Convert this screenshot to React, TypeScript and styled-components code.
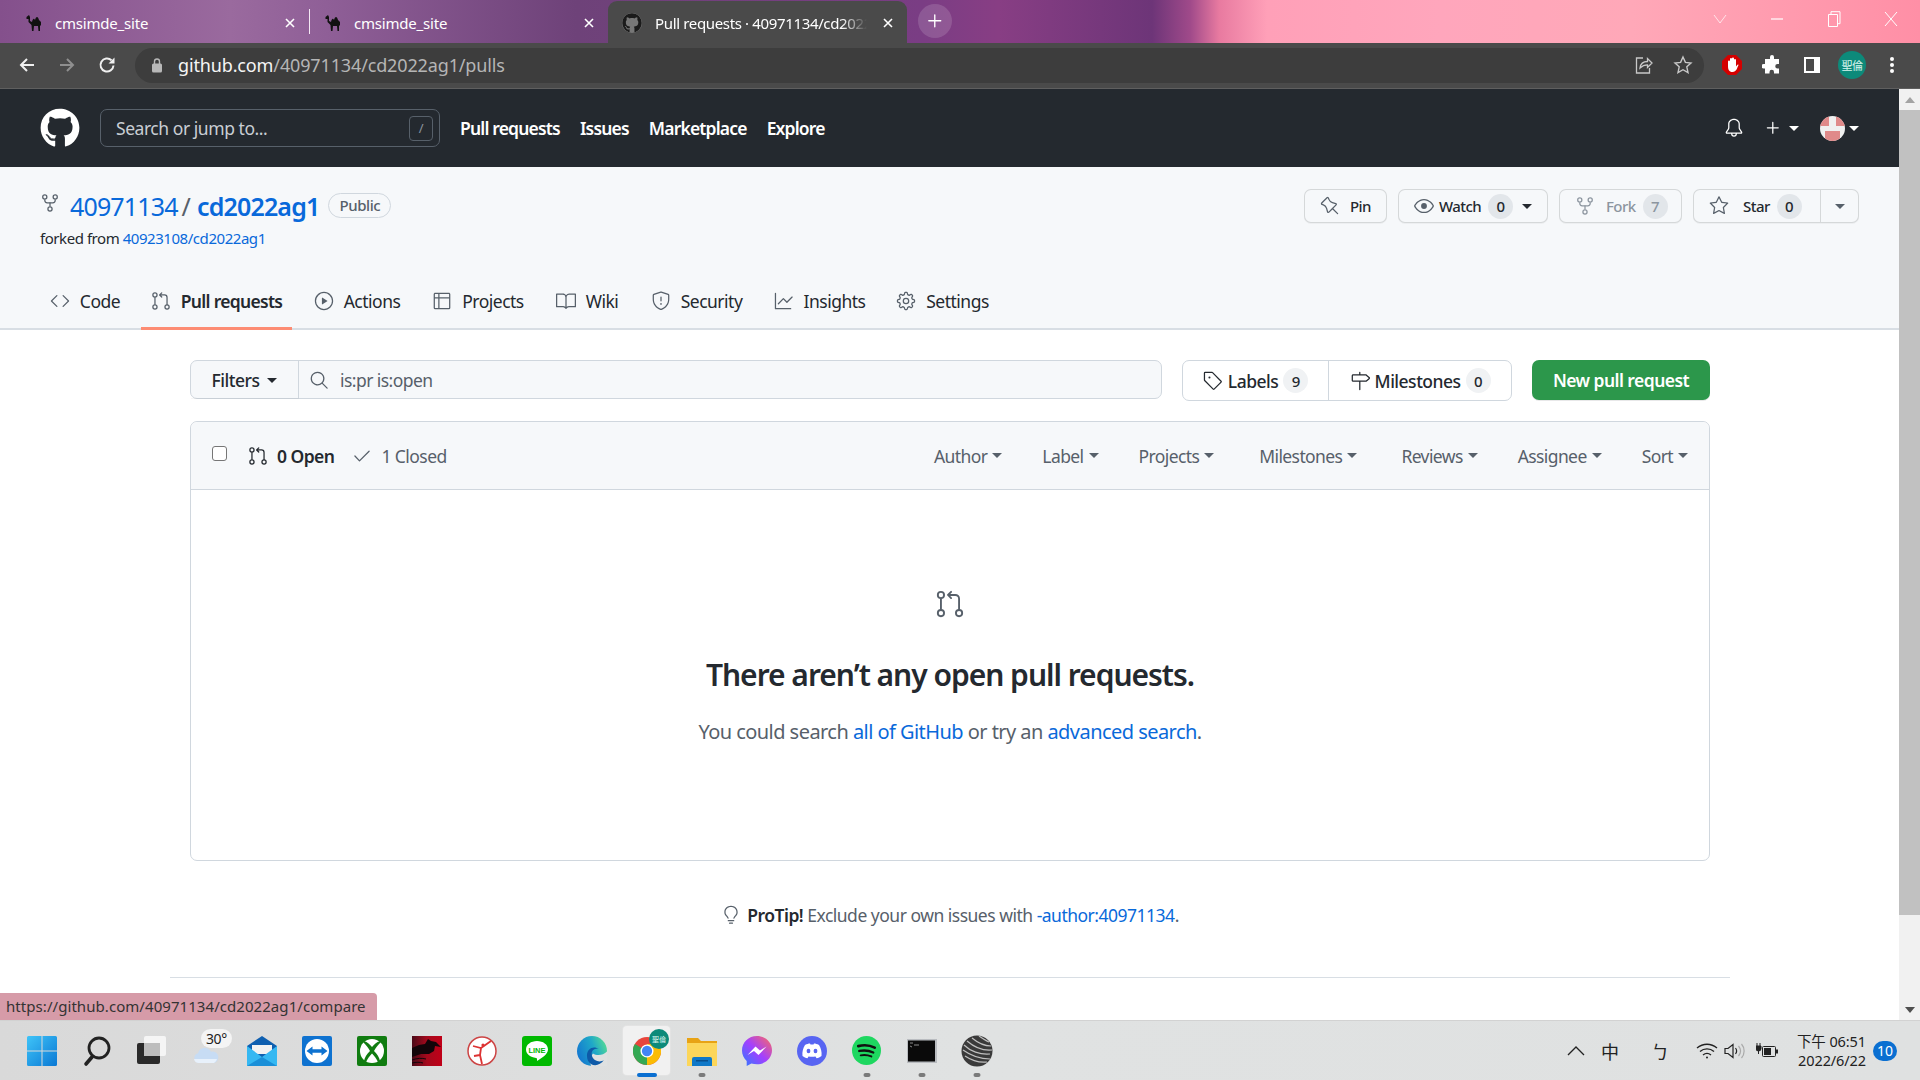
import React from 'react';
import styled, { createGlobalStyle } from 'styled-components';
import {
  GoBell, GoBook, GoCheck, GoCode, GoEye, GoGear, GoGitPullRequest, GoGraph, GoLightBulb,
  GoMilestone, GoPin, GoPlay, GoPlus, GoRepoForked, GoSearch, GoShield,
  GoStar, GoTable, GoTag,
} from 'react-icons/go';
import { FaGithub } from 'react-icons/fa';

const sans = '"Noto Sans", "Noto Sans CJK TC", sans-serif';

const GlobalStyle = createGlobalStyle`
  html, body { margin: 0; padding: 0; height: 100%; overflow: hidden; }
  body { font-family: ${sans}; color: #24292f; background: #fff; }
  * { box-sizing: border-box; }
  a { color: #0969da; text-decoration: none; }
`;

const Screen = styled.div`
  width: 1920px;
  height: 1080px;
  display: flex;
  flex-direction: column;
  overflow: hidden;
`;

/* browser chrome */
const TabStrip = styled.div`
  height: 43px;
  flex: none;
  display: flex;
  align-items: flex-end;
  padding-left: 10px;
  background: linear-gradient(90deg, #84508c 0%, #9a6a9e 12%, #8f5f97 17%, #6e4279 30%, #7a3d84 48%, #883e84 52%, #6d3578 60%, #a04a8a 62%, #e87aa0 63.500%, #ffa0b8 66%, #ffa6bc 75%, #ffa8b8 85%, #ff8fa6 100%);
`;

const BrowserTab = styled.div<{ $active?: boolean }>`
  width: 299px;
  height: 42px;
  display: flex;
  align-items: center;
  gap: 13px;
  padding: 2px 11px 0 16px;
  color: #fff;
  font-size: 15px;
  letter-spacing: -0.2px;
  border-radius: 9px 9px 0 0;
  background: ${p => (p.$active ? '#4a4a4a' : 'transparent')};
`;

const TabDivider = styled.div`
  width: 1px;
  height: 25px;
  margin: 0 -1px 9px 0;
  background: #f4e8f4;
  flex: none;
`;

const TabTitle = styled.span<{ $fade?: boolean }>`
  flex: 1;
  white-space: nowrap;
  overflow: hidden;
  ${p => p.$fade && 'mask-image: linear-gradient(90deg, #000 88%, transparent 100%); letter-spacing: -0.35px;'}
`;

const NewTab = styled.div`
  width: 34px;
  height: 34px;
  margin: 0 0 1px 11px;
  border-radius: 50%;
  display: flex;
  align-items: center;
  justify-content: center;
  background: rgba(255, 255, 255, .14);
  align-self: center;
`;

const WindowButtons = styled.div`
  margin-left: auto;
  align-self: stretch;
  display: flex;
  padding-right: 1px;
`;

const WindowButton = styled.div`
  width: 57px;
  display: flex;
  align-items: center;
  justify-content: center;
  padding-bottom: 6px;
`;

const Toolbar = styled.div`
  height: 46px;
  flex: none;
  display: flex;
  align-items: center;
  padding: 0 8px 1px 7px;
  background: #4a4a4a;
  border-bottom: 1px solid #5f5f5f;
`;

const ToolButton = styled.div<{ $dim?: boolean }>`
  width: 40px;
  height: 34px;
  flex: none;
  display: flex;
  align-items: center;
  justify-content: center;
  color: ${p => (p.$dim ? '#8f8f8f' : '#f0f0f0')};
`;

const Omnibox = styled.div`
  flex: 1;
  height: 35px;
  margin: 0 8px;
  padding: 0 2px 0 15px;
  display: flex;
  align-items: center;
  border-radius: 18px;
  background: #3d3d3d;
`;

const Url = styled.div`
  margin-left: 14px;
  flex: 1;
  font-size: 18px;
  letter-spacing: -0.14px;
  color: #b5b5b5;
  b { font-weight: 400; color: #f5f5f5; }
`;

const OmniAction = styled.div`
  width: 39px;
  display: flex;
  justify-content: center;
  color: #c8c8c8;
`;

const ProfileChip = styled.div`
  width: 28px;
  height: 28px;
  border-radius: 50%;
  background: #0d8a7a;
  color: #d8f5ef;
  font-size: 11px;
  letter-spacing: -0.5px;
  display: flex;
  align-items: center;
  justify-content: center;
  font-family: "Noto Sans CJK TC", sans-serif;
`;

/* page */
const Viewport = styled.div`
  flex: 1;
  min-height: 0;
  display: flex;
  position: relative;
`;

const Page = styled.div`
  flex: 1;
  min-width: 0;
  overflow: hidden;
`;

const Scrollbar = styled.div`
  width: 21px;
  flex: none;
  display: flex;
  flex-direction: column;
  background: #f1f1f1;
`;

const ScrollArrow = styled.div<{ $down?: boolean }>`
  height: 21px;
  flex: none;
  display: flex;
  align-items: center;
  justify-content: center;
  &::after {
    content: '';
    border-left: 5px solid transparent;
    border-right: 5px solid transparent;
    ${p => (p.$down ? 'border-top: 6px solid #505050;' : 'border-bottom: 6px solid #a3a3a3;')}
  }
`;

const ScrollThumb = styled.div`
  height: 805px;
  flex: none;
  background: #c1c1c1;
`;

const ScrollRest = styled.div`
  flex: 1;
`;

const StatusBubble = styled.div`
  position: absolute;
  left: 0;
  bottom: 0;
  height: 27px;
  padding: 0 11px 1px 6px;
  display: flex;
  align-items: center;
  font-size: 15px;
  letter-spacing: 0.06px;
  color: #333;
  background: #d69ba8;
  border-top-right-radius: 4px;
  font-family: "Noto Sans", sans-serif;
`;

const Header = styled.header`
  height: 78px;
  display: flex;
  align-items: center;
  padding: 0 40px 0 40px;
  background: #24292f;
  color: #fff;
`;

const HeaderSearch = styled.div`
  width: 340px;
  height: 38px;
  margin-left: 20px;
  padding: 0 6px 0 15px;
  display: flex;
  align-items: center;
  justify-content: space-between;
  border: 1px solid #57606a;
  border-radius: 7px;
  color: #c9ced4;
  font-size: 17.5px;
  letter-spacing: -0.45px;
`;

const SlashKey = styled.span`
  width: 24px;
  height: 25px;
  display: flex;
  align-items: center;
  justify-content: center;
  border: 1px solid #57606a;
  border-radius: 4px;
  font-size: 13px;
  color: #8b949e;
`;

const HeaderNav = styled.nav`
  display: flex;
  gap: 20px;
  margin-left: 20px;
  font-size: 17.5px;
  font-weight: 600;
  letter-spacing: -0.82px;
`;

const HeaderRight = styled.div`
  margin-left: auto;
  display: flex;
  align-items: center;
`;

const Caret = styled.span<{ $color?: string; $size?: number; $left?: number }>`
  display: inline-block;
  flex: none;
  margin-left: ${p => p.$left ?? 5}px;
  border-left: ${p => p.$size ?? 5}px solid transparent;
  border-right: ${p => p.$size ?? 5}px solid transparent;
  border-top: ${p => p.$size ?? 5}px solid ${p => p.$color ?? 'currentColor'};
`;

const PlusSlot = styled.span`
  display: flex;
  margin: 0 21px 0 19px;
  align-items: center;
`;

const RepoHead = styled.div`
  height: 163px;
  display: flex;
  flex-direction: column;
  justify-content: space-between;
  padding: 22px 40px 0 40px;
  background: #f6f8fa;
  border-bottom: 2px solid #d8dee4;
`;

const RepoTop = styled.div`
  display: flex;
  justify-content: space-between;
  align-items: flex-start;
`;

const RepoTitle = styled.div`
  display: flex;
  align-items: center;
  height: 34px;
  font-size: 25px;
  letter-spacing: -0.85px;
  color: #57606a;
  svg { margin: -6px 10px 0 0; }
`;

const Slash = styled.span`
  margin: 0 7px 0 4px;
`;

const RepoName = styled.a`
  font-weight: 600;
`;

const PublicBadge = styled.span`
  margin: -2px 0 0 9px;
  height: 25px;
  padding: 0 10px;
  display: flex;
  align-items: center;
  border: 1px solid #d0d7de;
  border-radius: 13px;
  font-size: 15px;
  font-weight: 500;
  letter-spacing: -0.4px;
  color: #57606a;
`;

const ForkedFrom = styled.div`
  margin-top: 4px;
  font-size: 15px;
  line-height: 22px;
  letter-spacing: -0.45px;
  color: #24292f;
`;

const RepoActions = styled.div`
  display: flex;
  gap: 11px;
`;

const ActionButton = styled.div<{ $muted?: boolean; $w: number }>`
  width: ${p => p.$w}px;
  height: 34px;
  display: flex;
  align-items: center;
  padding-left: 15px;
  border: 1px solid rgba(27, 31, 36, .15);
  border-radius: 7px;
  background: #f6f8fa;
  box-shadow: 0 1px 0 rgba(27, 31, 36, .04);
  font-size: 15px;
  font-weight: 500;
  letter-spacing: -0.55px;
  color: ${p => (p.$muted ? '#8c959f' : '#24292f')};
  svg { color: ${p => (p.$muted ? '#8c959f' : '#57606a')}; flex: none; }
`;

const ActionLabel = styled.span<{ $left: number }>`
  margin: 0 7px 0 ${p => p.$left}px;
`;

const ActionSplit = styled.div`
  display: flex;
  align-items: center;
  align-self: stretch;
  width: 38px;
  justify-content: center;
  margin-left: auto;
  border-left: 1px solid rgba(27, 31, 36, .15);
  color: #57606a;
`;

const Counter = styled.span<{ $light?: boolean }>`
  min-width: 25px;
  height: 25px;
  padding: 0 6px;
  display: inline-flex;
  align-items: center;
  justify-content: center;
  border-radius: 13px;
  font-size: 15px;
  font-weight: 500;
  letter-spacing: -0.3px;
  background: ${p => (p.$light ? '#f0f2f4' : 'rgba(175, 184, 193, .28)')};
`;

const RepoTabs = styled.nav`
  display: flex;
  gap: 11px;
  margin-bottom: -2px;
`;

const RepoTab = styled.a<{ $active?: boolean; $w: number }>`
  width: ${p => p.$w}px;
  height: 48px;
  padding-bottom: 8px;
  display: flex;
  align-items: center;
  justify-content: center;
  gap: 10px;
  font-size: 17.5px;
  font-weight: ${p => (p.$active ? 600 : 400)};
  letter-spacing: ${p => (p.$active ? -0.7 : -0.5)}px;
  color: #24292f;
  border-bottom: 3px solid ${p => (p.$active ? '#fd8c73' : 'transparent')};
  svg { color: #57606a; flex: none; }
`;

const Main = styled.main`
  width: 1520px;
  margin-left: 190px;
  padding-top: 30px;
`;

const FilterRow = styled.div`
  display: flex;
  align-items: flex-start;
  gap: 20px;
`;

const FilterSearch = styled.div`
  flex: 1;
  height: 39px;
  display: flex;
  border: 1px solid #d0d7de;
  border-radius: 7px;
  background: #f6f8fa;
  font-size: 17.5px;
`;

const FiltersButton = styled.div`
  width: 108px;
  flex: none;
  display: flex;
  align-items: center;
  justify-content: center;
  padding-top: 1px;
  font-weight: 500;
  letter-spacing: -0.5px;
  border-right: 1px solid #d0d7de;
  box-shadow: 0 1px 0 rgba(27, 31, 36, .04);
`;

const SearchField = styled.div`
  flex: 1;
  display: flex;
  align-items: center;
  gap: 11px;
  padding: 1px 0 0 10px;
  color: #57606a;
  letter-spacing: -0.55px;
`;

const LabelGroup = styled.div`
  width: 330px;
  height: 41px;
  flex: none;
  display: flex;
  border: 1px solid #d0d7de;
  border-radius: 7px;
  font-size: 17.5px;
  font-weight: 500;
  letter-spacing: -0.5px;
`;

const LabelLink = styled.div<{ $w: number }>`
  width: ${p => p.$w}px;
  display: flex;
  align-items: center;
  justify-content: center;
  gap: 5px;
  & + & { border-left: 1px solid #d0d7de; }
  svg { flex: none; }
`;

const NewPullButton = styled.div`
  width: 178px;
  height: 40px;
  flex: none;
  display: flex;
  align-items: center;
  justify-content: center;
  border-radius: 7px;
  background: #2c974b;
  color: #fff;
  font-size: 17.5px;
  font-weight: 600;
  letter-spacing: -0.55px;
  box-shadow: 0 1px 0 rgba(27, 31, 36, .1);
`;

const IssueBox = styled.section`
  margin-top: 20px;
  height: 440px;
  display: flex;
  flex-direction: column;
  border: 1px solid #d0d7de;
  border-radius: 7px;
`;

const BoxHeader = styled.div`
  height: 68px;
  flex: none;
  display: flex;
  align-items: center;
  padding: 0 21px;
  background: #f6f8fa;
  border-bottom: 1px solid #d0d7de;
  border-radius: 7px 7px 0 0;
  font-size: 17.5px;
  letter-spacing: -0.55px;
`;

const Check = styled.span`
  width: 15px;
  height: 15px;
  margin: -4px 21px 0 0;
  border: 1px solid #767676;
  border-radius: 3px;
  background: #fff;
`;

const StateLink = styled.div<{ $open?: boolean }>`
  display: flex;
  align-items: center;
  gap: 9px;
  margin-right: 18px;
  font-weight: ${p => (p.$open ? 600 : 400)};
  color: ${p => (p.$open ? '#24292f' : '#57606a')};
  svg { color: ${p => (p.$open ? '#24292f' : '#57606a')}; }
`;

const HeadFilters = styled.div`
  margin-left: auto;
  display: flex;
  color: #57606a;
  letter-spacing: -0.6px;
`;

const HeadFilter = styled.div<{ $gap: number }>`
  display: flex;
  align-items: center;
  margin-right: ${p => p.$gap}px;
`;

const Blankslate = styled.div`
  flex: 1;
  display: flex;
  flex-direction: column;
  align-items: center;
  padding-top: 99px;
  color: #57606a;
`;

const BlankTitle = styled.h3`
  margin: 35px 0 0;
  font-size: 30px;
  line-height: 42px;
  font-weight: 600;
  letter-spacing: -1.02px;
  color: #24292f;
`;

const BlankText = styled.p`
  margin: 21px 0 0;
  font-size: 20px;
  line-height: 30px;
  letter-spacing: -0.55px;
`;

const ProTip = styled.div`
  margin-top: 42px;
  display: flex;
  align-items: center;
  justify-content: center;
  font-size: 17.5px;
  line-height: 24px;
  letter-spacing: -0.5px;
  color: #57606a;
  svg { margin-right: 6px; }
  b { font-weight: 600; color: #24292f; }
`;

const FooterRule = styled.hr`
  width: 1560px;
  margin: 50px auto 0;
  border: 0;
  border-top: 1px solid #d8dee4;
`;

/* taskbar */
const Taskbar = styled.footer`
  height: 60px;
  flex: none;
  display: flex;
  align-items: center;
  padding: 0 23px 0 14px;
  background: linear-gradient(90deg, #d9d9d9, #e0e2e2 50%, #dfe1e1);
  border-top: 1px solid #d2d2d2;
`;

const TaskItem = styled.div<{ $active?: boolean }>`
  position: relative;
  width: 55px;
  height: 49px;
  display: flex;
  align-items: center;
  justify-content: center;
  ${p => p.$active && `
    &::before {
      content: '';
      position: absolute;
      inset: 0 4px;
      background: #f1f1f1;
      border-radius: 4px;
      box-shadow: 0 0 0 1px #e3e3e3;
    }
  `}
  svg { position: relative; }
`;

const RunDot = styled.span<{ $active?: boolean }>`
  position: absolute;
  bottom: -2px;
  left: 50%;
  transform: translateX(-50%);
  width: ${p => (p.$active ? 20 : 7)}px;
  height: 4px;
  border-radius: 3px;
  background: ${p => (p.$active ? '#0a6fd1' : '#7a7a7a')};
`;

const WeatherBadge = styled.span`
  position: absolute;
  top: 3px;
  right: 2px;
  padding: 1px 5px;
  border-radius: 10px;
  background: #f4f4f4;
  font-size: 14px;
  line-height: 17px;
  letter-spacing: -0.3px;
  color: #222;
`;

const ChromeBadge = styled.span`
  position: absolute;
  top: 3px;
  right: 5px;
  width: 20px;
  height: 20px;
  border-radius: 50%;
  background: #0d8a7a;
  color: #d8f5ef;
  font-size: 7px;
  line-height: 20px;
  text-align: center;
  font-family: "Noto Sans CJK TC", sans-serif;
`;

const Tray = styled.div`
  margin-left: auto;
  display: flex;
  align-items: center;
  color: #222;
`;

const TrayItem = styled.div<{ $w: number }>`
  width: ${p => p.$w}px;
  display: flex;
  justify-content: center;
  font-size: 18px;
  font-family: "Noto Sans CJK TC", sans-serif;
`;

const Clock = styled.div`
  width: 81px;
  margin-right: 7px;
  text-align: right;
  font-size: 14.5px;
  line-height: 19px;
  white-space: nowrap;
  font-family: "Noto Sans", "Noto Sans CJK TC", sans-serif;
  letter-spacing: -0.1px;
`;

const NotifyBadge = styled.div`
  width: 24px;
  height: 20px;
  border-radius: 10px;
  background: #0a6fd1;
  color: #fff;
  font-size: 14px;
  display: flex;
  align-items: center;
  justify-content: center;
`;

/* drawings */
const CamelFavicon = () => (
  <svg width="16" height="18" viewBox="0 0 16 18" style={{ flex: 'none' }}>
    <path d="M3 1L4 3V7L6 8C7 4 8 4 9 6C10 2 12 2 13 6L15 8V11L14 12V17H12.500L12 12H8L7.500 17H6L5.500 11L2.500 8V5H.5V3z" fill="#111" />
  </svg>
);

const GithubFavicon = () => <FaGithub size={20} color="#1b1b1b" style={{ marginLeft: -2, background: '#777', borderRadius: '50%', flex: 'none' }} />;

const CloseX = () => (
  <svg width="16" height="16" viewBox="0 0 16 16" style={{ flex: 'none' }}>
    <path d="M4 4l8 8M12 4l-8 8" stroke="#fff" strokeWidth="1.600" />
  </svg>
);

const WinChevron = () => (
  <svg width="14" height="10" viewBox="0 0 14 10"><path d="M1 1l6 8 6-8" fill="none" stroke="#fff" strokeOpacity=".7" /></svg>
);
const WinMin = () => (
  <svg width="14" height="10" viewBox="0 0 14 10"><path d="M1 5h12" stroke="#fff" strokeWidth="1.200" /></svg>
);
const WinRestore = () => (
  <svg width="14" height="16" viewBox="0 0 14 16"><path d="M1.500 3.500h9v12h-9zM4 3V.7h9v12h-2" fill="none" stroke="#fff" /></svg>
);
const WinClose = () => (
  <svg width="14" height="16" viewBox="0 0 14 16"><path d="M1 1l12 14M13 1L1 15" stroke="#fff" /></svg>
);

const ArrowLeft = () => (
  <svg width="18" height="18" viewBox="0 0 18 18"><path d="M16 9H3M9 3L3 9l6 6" fill="none" stroke="currentColor" strokeWidth="2" /></svg>
);
const ArrowRight = () => (
  <svg width="18" height="18" viewBox="0 0 18 18"><path d="M2 9h13M9 3l6 6-6 6" fill="none" stroke="currentColor" strokeWidth="2" /></svg>
);
const Reload = () => (
  <svg width="18" height="18" viewBox="0 0 18 18">
    <path d="M15.500 9.500a6.500 6.500 0 1 1-2-5.200" fill="none" stroke="currentColor" strokeWidth="2" />
    <path d="M16.500 1.500V7.500H10.500z" fill="currentColor" />
  </svg>
);
const FilledLock = () => (
  <svg width="14" height="16" viewBox="0 0 14 16" style={{ flex: 'none' }}>
    <rect x="2" y="6.500" width="10" height="9" rx="1.500" fill="#b8b8b8" />
    <path d="M4.500 7V4.500a2.500 2.500 0 0 1 5 0V7" fill="none" stroke="#b8b8b8" strokeWidth="1.400" />
  </svg>
);
const ShareIcon = () => (
  <svg width="20" height="20" viewBox="0 0 20 20" fill="none" stroke="currentColor" strokeWidth="1.300">
    <path d="M9 3H2.500v15h13v-5" />
    <path d="M6 13c.5-4 3.500-6.500 7.500-6.500V3.500L18 8l-4.500 4.500V9.800C10.500 9.800 8 11 6 13z" />
  </svg>
);
const OutlineStar = () => (
  <svg width="20" height="20" viewBox="0 0 20 20"><path d="M10 2l2.400 5.400 5.600.6-4.200 3.800 1.200 5.800L10 14.700l-5 2.900 1.200-5.800L2 8l5.600-.6z" fill="none" stroke="currentColor" strokeWidth="1.400" /></svg>
);
const StopHand = () => (
  <svg width="22" height="22" viewBox="0 0 22 22">
    <path d="M7 1h8l6 6v8l-6 6H7l-6-6V7z" fill="#d40000" />
    <path d="M7 12V7.500a1 1 0 0 1 2 0V5a1 1 0 0 1 2 0v-.500a1 1 0 0 1 2 0V6a1 1 0 0 1 2 0v6.500c1-1 1-2 2-2 .500 0 .500.500.300 1C16 14 15.500 18 11.500 18 8 18 7 15.500 7 12z" fill="#fff" />
  </svg>
);
const PuzzleIcon = () => (
  <svg width="20" height="20" viewBox="0 0 20 20">
    <path d="M8 2a2 2 0 0 1 4 0v2h5v5h-1.500a2.200 2.200 0 0 0 0 4.500H17v5h-5v-1.500a2.200 2.200 0 0 0-4.500 0V18.500H3v-5H1.500a2.200 2.200 0 0 1 0-4.500H3V4h5z" fill="#fff" />
  </svg>
);
const SidePanelIcon = () => (
  <svg width="18" height="18" viewBox="0 0 18 18">
    <path d="M1 1h16v16H1zM3 3v12h8V3z" fill="#fff" fillRule="evenodd" />
  </svg>
);
const KebabIcon = () => (
  <svg width="4" height="18" viewBox="0 0 4 18" fill="#fff"><circle cx="2" cy="3" r="2" /><circle cx="2" cy="9" r="2" /><circle cx="2" cy="15" r="2" /></svg>
);
const UserAvatar = () => (
  <svg width="25" height="25" viewBox="0 0 25 25" style={{ borderRadius: '50%', background: '#f0f0f0', flex: 'none' }}>
    <path d="M0 0h9v10H0zM16 0h9v10h-9zM5 15h15v10H5z" fill="#e08a8a" />
  </svg>
);

const WinLogo = () => (
  <svg width="30" height="30" viewBox="0 0 30 30">
    <defs><linearGradient id="w" x1="0" y1="0" x2="1" y2="1"><stop offset="0" stopColor="#3fc4f8" /><stop offset="1" stopColor="#0a78d4" /></linearGradient></defs>
    <path d="M0 1.500A1.500 1.500 0 0 1 1.500 0h13v14.500H0zM15.500 0h13A1.500 1.500 0 0 1 30 1.500v13H15.500zM0 15.500h14.500V30h-13A1.500 1.500 0 0 1 0 28.500zM15.500 15.500H30v13a1.500 1.500 0 0 1-1.500 1.500h-13z" fill="url(#w)" />
  </svg>
);
const SearchGlyph = () => (
  <svg width="30" height="32" viewBox="0 0 30 32" fill="none" stroke="#222">
    <circle cx="17" cy="13" r="10" strokeWidth="2.800" />
    <path d="M10 22l-6 7" strokeWidth="3.600" strokeLinecap="round" />
  </svg>
);
const TaskView = () => (
  <svg width="30" height="30" viewBox="0 0 30 30">
    <rect x="0" y="7" width="23" height="21" rx="2" fill="#2a2a2a" />
    <rect x="7" y="0" width="22" height="20" rx="2" fill="#f5f5f5" />
    <rect x="7" y="7" width="16" height="13" fill="#bdbdbd" />
  </svg>
);
const Cloud = () => (
  <svg width="28" height="18" viewBox="0 0 28 18" style={{ marginTop: 9 }}>
    <path d="M6 17a5 5 0 0 1-1-9.800 7 7 0 0 1 13-1.500 5.800 5.800 0 0 1 3 11.300z" fill="#c7dcf4" />
    <path d="M6 17a5 5 0 0 1-5-4h23a5.800 5.800 0 0 1-3 4z" fill="#e8f1fb" />
  </svg>
);
const MailIcon = () => (
  <svg width="30" height="30" viewBox="0 0 30 30">
    <path d="M15 0l15 10v20H0V10z" fill="#0f5fb0" />
    <path d="M5 9h20v9H5z" fill="#f2f2f2" />
    <path d="M0 10l15 11 15-11v20H0z" fill="#35b8f2" />
    <path d="M0 30l15-9 15 9z" fill="#1a8fd8" />
  </svg>
);
const TeamViewer = () => (
  <svg width="30" height="30" viewBox="0 0 30 30">
    <rect width="30" height="30" rx="2" fill="#0e72d0" />
    <circle cx="15" cy="15" r="12" fill="#fff" />
    <path d="M4.500 15l6-4.500V13.200h9V10.500l6 4.500-6 4.500V16.800h-9v2.700z" fill="#0e72d0" />
  </svg>
);
const XboxIcon = () => (
  <svg width="30" height="30" viewBox="0 0 30 30">
    <rect width="30" height="30" rx="2" fill="#107c10" />
    <circle cx="15" cy="15" r="12" fill="#fff" />
    <path d="M7 5c3.500 1 6 3.500 8 6 2-2.500 4.500-5 8-6l1 1c-3 3-5.500 6-7 9 3 3 5.500 6.500 6 10l-2 1c-1.500-3-3.500-6-6-8.500C12.500 20 10.500 23 9 26l-2-1c.5-3.500 3-7 6-10-1.500-3-4-6-7-9z" fill="#107c10" />
  </svg>
);
const RedApp = () => (
  <svg width="30" height="30" viewBox="0 0 30 30">
    <defs><linearGradient id="r" x1="0" y1="0" x2="1" y2="0"><stop offset="0" stopColor="#4a0a18" /><stop offset=".5" stopColor="#a5091c" /><stop offset="1" stopColor="#c00018" /></linearGradient></defs>
    <rect width="30" height="30" fill="url(#r)" />
    <path d="M0 12l7-3 6-1 3-5 3 2 5 1 5 5-6-1-1 5-5 3H9l-9 3z" fill="#120509" />
    <path d="M0 24c5-2 10-2 14-1M0 27c4-1 8-1 11 0" stroke="#120509" fill="none" />
  </svg>
);
const BalletIcon = () => (
  <svg width="30" height="30" viewBox="0 0 30 30" fill="none">
    <circle cx="15" cy="15" r="14" fill="#fff" stroke="#c44" strokeWidth="1.500" />
    <path d="M6 10l8 2 10-7M14 12l-1 7 2 9M13 19l-6 1" stroke="#d33" strokeWidth="1.800" />
    <circle cx="16" cy="9" r="1.600" fill="#d33" />
  </svg>
);
const LineIcon = () => (
  <svg width="30" height="30" viewBox="0 0 30 30">
    <rect width="30" height="30" rx="3" fill="#00b900" />
    <path d="M15 5c6 0 11 3.500 11 8.500 0 5-7 9-11 11.500 0-2 .3-3-1-3.100C8.500 21.500 4 18 4 13.500 4 8.500 9 5 15 5z" fill="#fff" />
    <text x="15" y="16.500" fontSize="7.500" fontWeight="700" textAnchor="middle" fill="#00b900" fontFamily="Liberation Sans, sans-serif">LINE</text>
  </svg>
);
const EdgeIcon = () => (
  <svg width="30" height="30" viewBox="0 0 30 30">
    <defs><linearGradient id="e" x1="0" y1=".6" x2="1" y2=".2"><stop offset="0" stopColor="#1478d0" /><stop offset=".55" stopColor="#1fa8c8" /><stop offset="1" stopColor="#58de92" /></linearGradient></defs>
    <circle cx="15" cy="15" r="15" fill="url(#e)" />
    <path d="M16 17.500c4 2.500 10 2 14-2V30H14c-1-4-1-9 2-12.500z" fill="#dfe1e1" />
    <path d="M10 20C9.500 13 16 9 22 13c-5-1-8.500 2-7 7 1.500 5 8 7 12 4-3.500 5-9 6.500-13 4-3-2-4-5-4-8z" fill="#0e5aa8" />
  </svg>
);
const ChromeIcon = () => (
  <svg width="28" height="28" viewBox="0 0 30 30">
    <circle cx="15" cy="15" r="15" fill="#e8453c" />
    <path d="M15 15L2 7.500A15 15 0 0 0 15 30z" fill="#34a853" />
    <path d="M15 15v15A15 15 0 0 0 28 7.500H15z" fill="#fbbc05" />
    <circle cx="15" cy="15" r="7" fill="#fff" />
    <circle cx="15" cy="15" r="5.500" fill="#4285f4" />
  </svg>
);
const FolderIcon = () => (
  <svg width="30" height="30" viewBox="0 0 30 30">
    <path d="M0 2h11l3 3h16v25H0z" fill="#e8a315" />
    <rect y="7" width="30" height="23" fill="#fcd65a" />
    <path d="M5 30v-7a2 2 0 0 1 2-2h16a2 2 0 0 1 2 2v7z" fill="#0f78c8" />
    <rect x="9" y="24" width="12" height="1.500" fill="#084f8e" />
  </svg>
);
const MessengerIcon = () => (
  <svg width="30" height="30" viewBox="0 0 30 30">
    <defs><linearGradient id="m" x1="0" y1="1" x2="1" y2="0"><stop offset="0" stopColor="#2b7cff" /><stop offset=".5" stopColor="#a33fff" /><stop offset="1" stopColor="#ff6c5c" /></linearGradient></defs>
    <path d="M15 0C6.500 0 0 6.300 0 14.500c0 4.200 1.800 7.900 4.700 10.400V30l4.700-2.600c1.700.5 3.600.8 5.600.8 8.500 0 15-6.300 15-14S23.500 0 15 0z" fill="url(#m)" />
    <path d="M5.500 19L13.500 10.500l4.500 4 6.500-4-8 8.500-4.500-4z" fill="#fff" />
  </svg>
);
const DiscordIcon = () => (
  <svg width="30" height="30" viewBox="0 0 30 30">
    <circle cx="15" cy="15" r="15" fill="#5865f2" />
    <path d="M8 9c2-1 3.500-1.500 5-1.500l.5 1h3l.5-1c1.500 0 3 .5 5 1.500 2 3 3 7 2.500 11-1.500 1.200-3.200 2-5 2.300l-1-1.800-.2-.1c-2 .6-4.600.6-6.600 0l-.2.1-1 1.800c-1.800-.3-3.500-1.100-5-2.300C5 16 6 12 8 9z" fill="#fff" />
    <ellipse cx="11.500" cy="15" rx="1.900" ry="2.200" fill="#5865f2" />
    <ellipse cx="18.500" cy="15" rx="1.900" ry="2.200" fill="#5865f2" />
  </svg>
);
const SpotifyIcon = () => (
  <svg width="29" height="29" viewBox="0 0 30 30" fill="none" stroke="#111" strokeLinecap="round">
    <circle cx="15" cy="15" r="15" fill="#1ed760" stroke="none" />
    <path d="M6.500 10.500c5.500-1.500 12-1 17 1.500" strokeWidth="2.800" />
    <path d="M7.500 15.500c5-1 10-.6 14.500 1.500" strokeWidth="2.400" />
    <path d="M9 20c3.500-.8 7.500-.4 11 1.200" strokeWidth="2" />
  </svg>
);
const TerminalIcon = () => (
  <svg width="30" height="24" viewBox="0 0 30 24">
    <rect width="30" height="24" fill="#b9bcc0" />
    <rect x="1" y="1.500" width="27" height="21" fill="#0a0a0a" />
    <path d="M3 4h3M7 6h5M3 7l2 1" stroke="#aaa" fill="none" strokeWidth=".8" />
  </svg>
);
const StripedBall = () => (
  <svg width="32" height="32" viewBox="0 0 32 32">
    <circle cx="16" cy="16" r="15.500" fill="#3a3a3a" />
    <g fill="none" stroke="#c0c0c0" strokeWidth="1.200">
      <path d="M3 10c6 6 16 10 26 9M2 15c7 5 17 9 27 9M4 21c6 4 14 7 22 6M6 6c7 6 15 10 25 9M11 3c6 5 12 8 19 8M18 1c3 2 7 5 10 6" />
    </g>
  </svg>
);

const repoTabs: { label: string; w: number; icon: React.ReactNode; active?: boolean }[] = [
  { label: 'Code', w: 90, icon: <GoCode size={20} /> },
  { label: 'Pull requests', w: 151, icon: <GoGitPullRequest size={20} />, active: true },
  { label: 'Actions', w: 108, icon: <GoPlay size={20} /> },
  { label: 'Projects', w: 112, icon: <GoTable size={20} /> },
  { label: 'Wiki', w: 84, icon: <GoBook size={20} /> },
  { label: 'Security', w: 113, icon: <GoShield size={20} /> },
  { label: 'Insights', w: 111, icon: <GoGraph size={20} /> },
  { label: 'Settings', w: 113, icon: <GoGear size={20} /> },
];

const headFilters = [
  { name: 'Author', gap: 40 },
  { name: 'Label', gap: 40 },
  { name: 'Projects', gap: 45 },
  { name: 'Milestones', gap: 44 },
  { name: 'Reviews', gap: 40 },
  { name: 'Assignee', gap: 40 },
  { name: 'Sort', gap: 0 },
];

const taskApps: React.ReactNode[] = [<WinLogo />, <SearchGlyph />, <TaskView />];

const pinnedApps: React.ReactNode[] = [
  <MailIcon />, <TeamViewer />, <XboxIcon />, <RedApp />, <BalletIcon />, <LineIcon />, <EdgeIcon />,
];

const trailingApps: { icon: React.ReactNode; running?: boolean }[] = [
  { icon: <FolderIcon />, running: true },
  { icon: <MessengerIcon /> },
  { icon: <DiscordIcon /> },
  { icon: <SpotifyIcon />, running: true },
  { icon: <TerminalIcon />, running: true },
  { icon: <StripedBall />, running: true },
];

const App: React.FC = () => (
  <Screen>
    <GlobalStyle />
    <TabStrip>
      <BrowserTab><CamelFavicon /><TabTitle>cmsimde_site</TabTitle><CloseX /></BrowserTab>
      <TabDivider />
      <BrowserTab><CamelFavicon /><TabTitle>cmsimde_site</TabTitle><CloseX /></BrowserTab>
      <BrowserTab $active><GithubFavicon /><TabTitle $fade>Pull requests · 40971134/cd2022ag1</TabTitle><CloseX /></BrowserTab>
      <NewTab><GoPlus size={22} color="#fff" /></NewTab>
      <WindowButtons>
        <WindowButton><WinChevron /></WindowButton>
        <WindowButton><WinMin /></WindowButton>
        <WindowButton><WinRestore /></WindowButton>
        <WindowButton><WinClose /></WindowButton>
      </WindowButtons>
    </TabStrip>

    <Toolbar>
      <ToolButton><ArrowLeft /></ToolButton>
      <ToolButton $dim><ArrowRight /></ToolButton>
      <ToolButton><Reload /></ToolButton>
      <Omnibox>
        <FilledLock />
        <Url><b>github.com</b>/40971134/cd2022ag1/pulls</Url>
        <OmniAction><ShareIcon /></OmniAction>
        <OmniAction><OutlineStar /></OmniAction>
      </Omnibox>
      <ToolButton><StopHand /></ToolButton>
      <ToolButton><PuzzleIcon /></ToolButton>
      <ToolButton><SidePanelIcon /></ToolButton>
      <ToolButton><ProfileChip>聖倫</ProfileChip></ToolButton>
      <ToolButton><KebabIcon /></ToolButton>
    </Toolbar>

    <Viewport>
      <Page>
        <Header>
          <FaGithub size={40} color="#fff" />
          <HeaderSearch>Search or jump to...<SlashKey>/</SlashKey></HeaderSearch>
          <HeaderNav>
            <span>Pull requests</span>
            <span>Issues</span>
            <span>Marketplace</span>
            <span>Explore</span>
          </HeaderNav>
          <HeaderRight>
            <GoBell size={20} />
            <PlusSlot><GoPlus size={20} /><Caret $left={6} /></PlusSlot>
            <UserAvatar />
            <Caret $left={4} />
          </HeaderRight>
        </Header>

        <RepoHead>
          <RepoTop>
            <div>
              <RepoTitle>
                <GoRepoForked size={20} />
                <a>40971134</a><Slash>/</Slash><RepoName>cd2022ag1</RepoName>
                <PublicBadge>Public</PublicBadge>
              </RepoTitle>
              <ForkedFrom>forked from <a>40923108/cd2022ag1</a></ForkedFrom>
            </div>
            <RepoActions>
              <ActionButton $w={83}><GoPin size={20} /><ActionLabel $left={10}>Pin</ActionLabel></ActionButton>
              <ActionButton $w={150}><GoEye size={20} /><ActionLabel $left={5}>Watch</ActionLabel><Counter>0</Counter><Caret $left={9} $color="#24292f" /></ActionButton>
              <ActionButton $w={123} $muted><GoRepoForked size={20} /><ActionLabel $left={11}>Fork</ActionLabel><Counter>7</Counter></ActionButton>
              <ActionButton $w={166}><GoStar size={20} /><ActionLabel $left={14}>Star</ActionLabel><Counter>0</Counter><ActionSplit><Caret $left={0} $color="#57606a" /></ActionSplit></ActionButton>
            </RepoActions>
          </RepoTop>
          <RepoTabs>
            {repoTabs.map(tab => (
              <RepoTab key={tab.label} $w={tab.w} $active={tab.active}>{tab.icon}{tab.label}</RepoTab>
            ))}
          </RepoTabs>
        </RepoHead>

        <Main>
          <FilterRow>
            <FilterSearch>
              <FiltersButton>Filters<Caret $left={8} /></FiltersButton>
              <SearchField><GoSearch size={20} />is:pr is:open</SearchField>
            </FilterSearch>
            <LabelGroup>
              <LabelLink $w={146}><GoTag size={20} />Labels <Counter $light>9</Counter></LabelLink>
              <LabelLink $w={184}><GoMilestone size={20} />Milestones <Counter $light>0</Counter></LabelLink>
            </LabelGroup>
            <NewPullButton>New pull request</NewPullButton>
          </FilterRow>

          <IssueBox>
            <BoxHeader>
              <Check />
              <StateLink $open><GoGitPullRequest size={20} />0 Open</StateLink>
              <StateLink><GoCheck size={20} />1 Closed</StateLink>
              <HeadFilters>
                {headFilters.map(f => (
                  <HeadFilter key={f.name} $gap={f.gap}>{f.name}<Caret /></HeadFilter>
                ))}
              </HeadFilters>
            </BoxHeader>
            <Blankslate>
              <GoGitPullRequest size={30} />
              <BlankTitle>There aren’t any open pull requests.</BlankTitle>
              <BlankText>You could search <a>all of GitHub</a> or try an <a>advanced search</a>.</BlankText>
            </Blankslate>
          </IssueBox>

          <ProTip>
            <GoLightBulb size={20} />
            <span><b>ProTip!</b> Exclude your own issues with <a>-author:40971134</a>.</span>
          </ProTip>
        </Main>
        <FooterRule />
      </Page>
      <Scrollbar>
        <ScrollArrow />
        <ScrollThumb />
        <ScrollRest />
        <ScrollArrow $down />
      </Scrollbar>
      <StatusBubble>https://github.com/40971134/cd2022ag1/compare</StatusBubble>
    </Viewport>

    <Taskbar>
      {taskApps.map((icon, i) => <TaskItem key={i}>{icon}</TaskItem>)}
      <TaskItem><Cloud /><WeatherBadge>30°</WeatherBadge></TaskItem>
      {pinnedApps.map((icon, i) => <TaskItem key={i}>{icon}</TaskItem>)}
      <TaskItem $active><ChromeIcon /><ChromeBadge>聖倫</ChromeBadge><RunDot $active /></TaskItem>
      {trailingApps.map((app, i) => <TaskItem key={i}>{app.icon}{app.running && <RunDot />}</TaskItem>)}
      <Tray>
        <TrayItem $w={34}><svg width="18" height="10" viewBox="0 0 18 10"><path d="M1 9l8-8 8 8" fill="none" stroke="#222" strokeWidth="1.300" /></svg></TrayItem>
        <TrayItem $w={34}>中</TrayItem>
        <TrayItem $w={66}>ㄅ</TrayItem>
        <TrayItem $w={28}><svg width="22" height="16" viewBox="0 0 22 16" fill="none" stroke="#222" strokeWidth="1.400"><path d="M1 5c6-5 14-5 20 0M4 8.500c4-3.500 10-3.500 14 0M7 12c2.500-2 5.500-2 8 0" /><circle cx="11" cy="14.500" r="1" fill="#222" stroke="none" /></svg></TrayItem>
        <TrayItem $w={28}><svg width="22" height="16" viewBox="0 0 22 16" fill="none" stroke="#222" strokeWidth="1.200"><path d="M1 5.500h3l5-4v13l-5-4H1z" /><path d="M11.500 5c1.500 2 1.500 4 0 6" /><path d="M14.500 3c2.500 3 2.500 7 0 10M17.500 1c3.500 4 3.500 10 0 14" stroke="#aaa" /></svg></TrayItem>
        <TrayItem $w={36}><svg width="22" height="16" viewBox="0 0 22 16"><rect x="6.500" y="3.500" width="13" height="10" rx="1" fill="none" stroke="#222" /><path d="M8 5h7v7H8zM20 6.500h2v4h-2z" fill="#222" /><path d="M1 0v3M4 0v3M0 3h5v2.500a2.500 2.500 0 0 1-5 0zM2.500 8v3" stroke="#222" fill="#222" /></svg></TrayItem>
        <Clock>下午 06:51<br />2022/6/22</Clock>
        <NotifyBadge>10</NotifyBadge>
      </Tray>
    </Taskbar>
  </Screen>
);

export default App;
